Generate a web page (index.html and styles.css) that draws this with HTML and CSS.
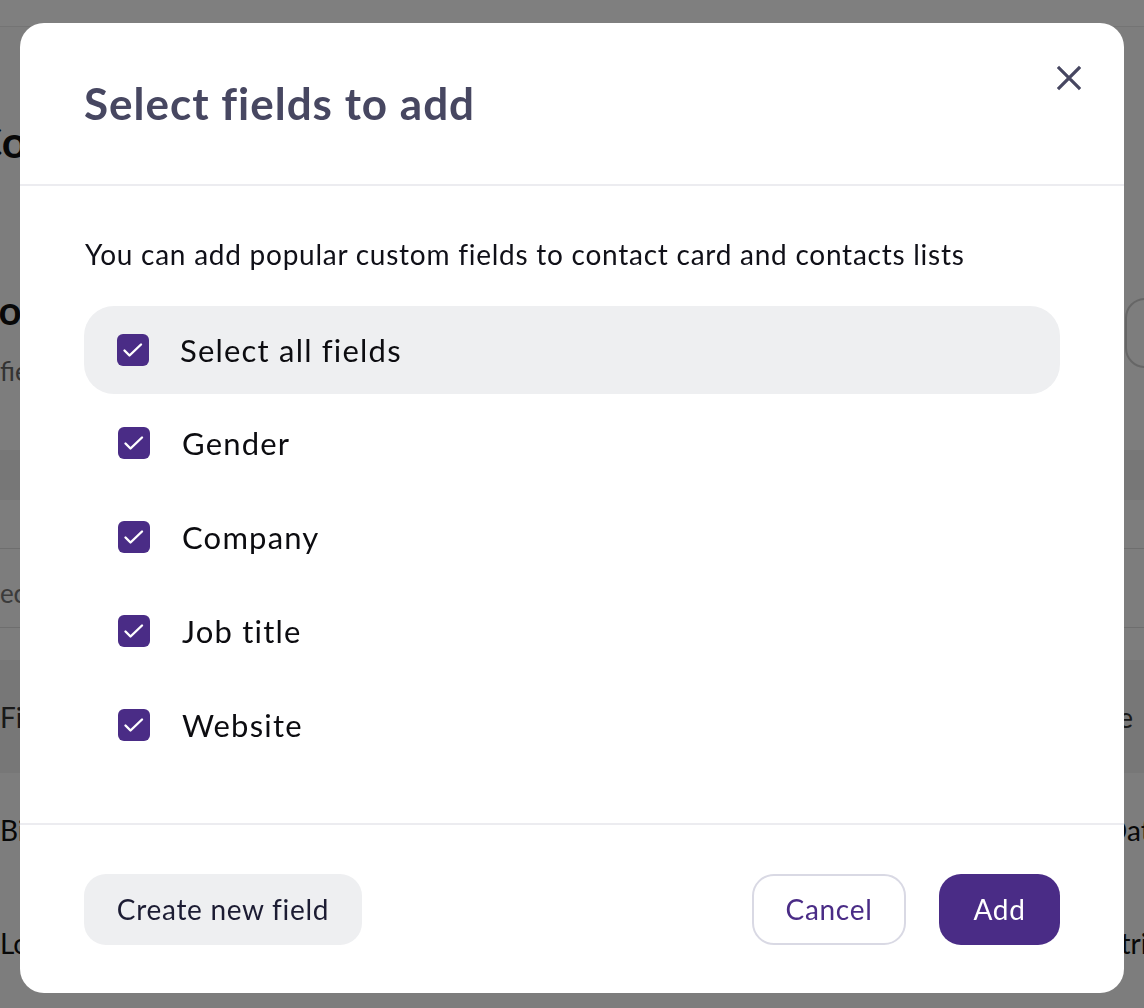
FILE: index.html
```html
<!DOCTYPE html>
<html lang="en">
<head>
<meta charset="utf-8">
<title>Select fields to add</title>
<link rel="stylesheet" href="styles.css">
</head>
<body>
<div class="page">
  <div class="topbar"></div>
  <h1 class="page-title">Co</h1>
  <div class="section-head">
    <div class="section-text">
      <h2 class="section-title">Info</h2>
      <p class="section-desc">fields</p>
    </div>
    <div class="section-btn"></div>
  </div>
  <div class="band"></div>
  <div class="search-row"><span class="search-text">Selected</span></div>
  <div class="table">
    <div class="tr th"><span>Field name</span><span class="type-h">Type</span></div>
    <div class="tr"><span>Birthday</span><span>Date</span></div>
    <div class="tr"><span>Location</span><span>String</span></div>
  </div>
</div>

<div class="overlay">
  <div class="modal" role="dialog">
    <div class="modal-header">
      <h3 class="modal-title">Select fields to add</h3>
      <button class="close" aria-label="Close">
        <svg viewBox="0 0 24 24" width="28" height="28"><path d="M3.5 3.5L20.5 20.5M20.5 3.5L3.5 20.5" stroke="#474761" stroke-width="2.8" stroke-linecap="square" fill="none"/></svg>
      </button>
    </div>
    <div class="modal-body">
      <p class="intro">You can add popular custom fields to contact card and contacts lists</p>
      <div class="opt opt-all"><span class="cb"><svg viewBox="0 0 32 32" width="32" height="32"><path d="M7.5 16.5L12.5 21.5L24 10.5" stroke="#fff" stroke-width="2.4" fill="none" stroke-linecap="round" stroke-linejoin="round"/></svg></span><span class="opt-label">Select all fields</span></div>
      <div class="opt"><span class="cb"><svg viewBox="0 0 32 32" width="32" height="32"><path d="M7.5 16.5L12.5 21.5L24 10.5" stroke="#fff" stroke-width="2.4" fill="none" stroke-linecap="round" stroke-linejoin="round"/></svg></span><span class="opt-label">Gender</span></div>
      <div class="opt"><span class="cb"><svg viewBox="0 0 32 32" width="32" height="32"><path d="M7.5 16.5L12.5 21.5L24 10.5" stroke="#fff" stroke-width="2.4" fill="none" stroke-linecap="round" stroke-linejoin="round"/></svg></span><span class="opt-label">Company</span></div>
      <div class="opt"><span class="cb"><svg viewBox="0 0 32 32" width="32" height="32"><path d="M7.5 16.5L12.5 21.5L24 10.5" stroke="#fff" stroke-width="2.4" fill="none" stroke-linecap="round" stroke-linejoin="round"/></svg></span><span class="opt-label">Job title</span></div>
      <div class="opt"><span class="cb"><svg viewBox="0 0 32 32" width="32" height="32"><path d="M7.5 16.5L12.5 21.5L24 10.5" stroke="#fff" stroke-width="2.4" fill="none" stroke-linecap="round" stroke-linejoin="round"/></svg></span><span class="opt-label">Website</span></div>
    </div>
    <div class="modal-footer">
      <button class="btn btn-soft">Create new field</button>
      <div class="footer-right">
        <button class="btn btn-outline">Cancel</button>
        <button class="btn btn-primary">Add</button>
      </div>
    </div>
  </div>
</div>
</body>
</html>
```

FILE: styles.css
```css
* { box-sizing: border-box; }
html, body { margin: 0; padding: 0; }
body {
  width: 1144px;
  height: 1008px;
  overflow: hidden;
  background: #fafafa;
  font-family: "Lato", "Noto Sans", sans-serif;
  color: #111;
}

/* background page (seen through the overlay) */
.topbar { height: 27px; background: #ffffff; border-bottom: 1px solid #e8e8e8; }
.page-title { margin: 0 0 0 -27px; padding-top: 84px; font-size: 44px; font-weight: 700; line-height: 60px; height: 190px; }
.section-head { display: flex; justify-content: space-between; align-items: flex-start; height: 233px; }
.section-title { margin: 0 0 0 -49px; padding-top: 68px; font-size: 40px; font-weight: 700; line-height: 50px; }
.section-desc { margin: 0; padding-top: 20px; font-size: 26px; color: #666; }
.section-btn { margin-top: 81px; width: 160px; height: 70px; border: 2px solid #ccc; border-radius: 20px; margin-right: -141px; }
.band { height: 50px; background: #eeeeee; }
.search-row { height: 112px; border-top: 1px solid #ddd; margin-top: 48px; }
.search-text { display: block; margin-left: -34px; padding-top: 28px; font-size: 26px; color: #777; border-bottom: 1px solid #ddd; height: 79px; }
.tr { display: grid; grid-template-columns: 1106px 1fr; align-items: center; height: 113px; font-size: 28px; white-space: nowrap; }
.th { background: #eeeeee; color: #333; }
.type-h { margin-left: -32px; }

/* overlay + modal */
.overlay {
  position: fixed;
  inset: 0;
  background: rgba(0, 0, 0, 0.5);
  padding: 23px 20px 15px 20px;
}
.modal {
  width: 1104px;
  height: 970px;
  background: #fff;
  border-radius: 24px;
  display: flex;
  flex-direction: column;
  overflow: hidden;
}
.modal-header {
  height: 163px;
  border-bottom: 2px solid #ececf0;
  display: flex;
  justify-content: space-between;
  align-items: flex-start;
  padding: 0 38px 0 64px;
}
.modal-title {
  margin: 0;
  padding-top: 54px;
  font-size: 44px;
  line-height: 52px;
  font-weight: 700;
  letter-spacing: 1px;
  color: #474761;
}
.close {
  margin-top: 38px;
  width: 34px; height: 34px;
  padding: 0; border: 0; background: none;
  display: flex; align-items: center; justify-content: center;
}
.modal-body {
  flex: 1;
  padding: 48px 64px 0 64px;
}
.intro {
  margin: 0 0 32px 1px;
  font-size: 28px;
  line-height: 40px;
  letter-spacing: 0.75px;
  color: #101018;
}
.opt {
  display: flex;
  align-items: center;
  gap: 32px;
  height: 94px;
  padding-left: 34px;
}
.opt-all {
  height: 88px;
  background: #eeeff1;
  border-radius: 30px;
  margin-bottom: 2px;
  padding-left: 33px;
  gap: 31px;
}
.cb {
  width: 32px; height: 32px;
  background: #4a2c86;
  border-radius: 6px;
  display: flex;
  flex: none;
}
.opt-label {
  font-size: 31px;
  letter-spacing: 1.2px;
  color: #0c0c10;
}
.modal-footer {
  height: 170px;
  border-top: 2px solid #ececf0;
  display: flex;
  justify-content: space-between;
  align-items: center;
  padding: 0 64px;
}
.footer-right { display: flex; gap: 33px; }
.btn {
  height: 71px;
  border-radius: 22px;
  font-family: "Lato", "Noto Sans", sans-serif;
  font-size: 28px;
  letter-spacing: 0.7px;
  padding: 0;
  border: 0;
}
.btn-soft { background: #eeeff1; color: #1c1c33; width: 278px; }
.btn-outline { background: #fff; border: 2px solid #d9d9e4; color: #4a2c86; width: 154px; }
.btn-primary { background: #4a2c86; color: #fff; width: 121px; }
```
